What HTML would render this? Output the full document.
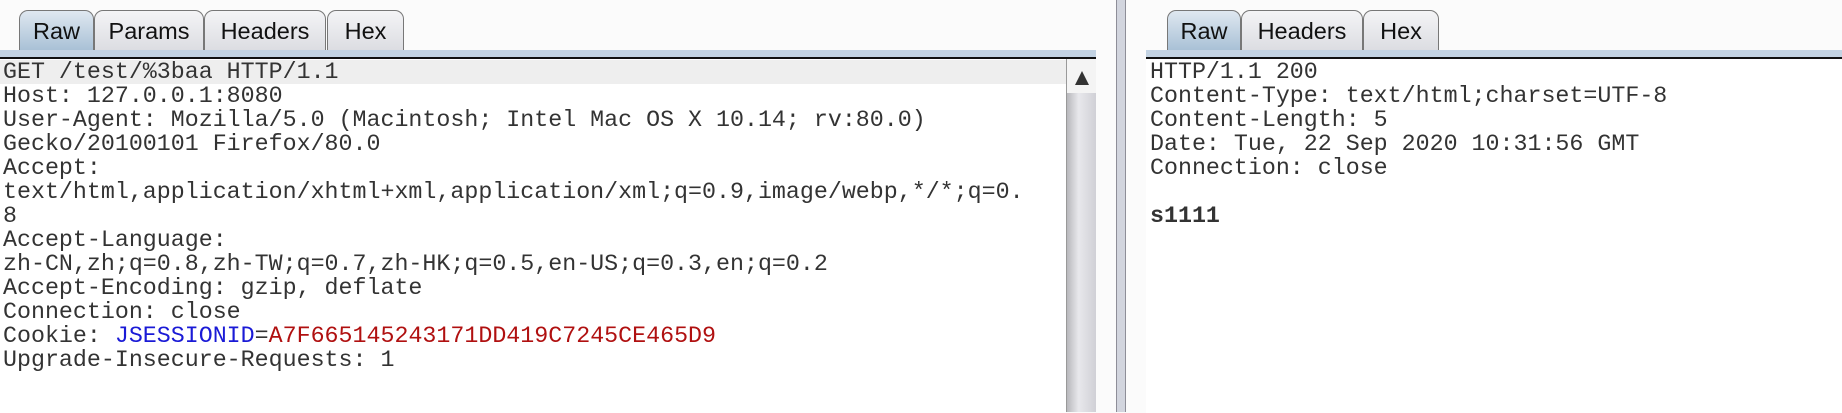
<!DOCTYPE html>
<html><head><meta charset="utf-8"><style>
body{margin:0;width:1842px;height:412px;background:#fbfbfb;position:relative;overflow:hidden;font-family:"Liberation Sans",sans-serif}
.tab{position:absolute;top:10px;height:40px;border:1px solid #777;border-bottom:none;border-radius:9px 9px 0 0;background:linear-gradient(#f4f4f6,#dcdde2);font-size:23.5px;line-height:41px;text-align:center;color:#111;box-sizing:border-box}
.tab.sel{background:linear-gradient(#dfe8f0,#a9c1d6)}
.band{position:absolute;top:50px;height:7px;background:#c3d3e3}
.dark{position:absolute;top:57px;height:2px;background:#111}
.txt{position:absolute;background:#fff;font-family:"Liberation Mono",monospace;font-size:23.3px;line-height:24px;color:#333;white-space:pre;overflow:hidden}
.hl{background:#eee;display:block;margin-left:-3px;padding-left:3px}
</style></head><body>
<div class="tab sel" style="left:19px;width:75px">Raw</div>
<div class="tab" style="left:94px;width:110px">Params</div>
<div class="tab" style="left:204px;width:122px">Headers</div>
<div class="tab" style="left:327px;width:77px">Hex</div>
<div class="band" style="left:0;width:1096px"></div>
<div class="dark" style="left:0;width:1096px"></div>
<div class="txt" style="left:0;top:59px;width:1063px;height:353px;padding-top:1px;padding-left:3px"><span class="hl">GET /test/%3baa HTTP/1.1</span>Host: 127.0.0.1:8080
User-Agent: Mozilla/5.0 (Macintosh; Intel Mac OS X 10.14; rv:80.0)
Gecko/20100101 Firefox/80.0
Accept:
text/html,application/xhtml+xml,application/xml;q=0.9,image/webp,*/*;q=0.
8
Accept-Language:
zh-CN,zh;q=0.8,zh-TW;q=0.7,zh-HK;q=0.5,en-US;q=0.3,en;q=0.2
Accept-Encoding: gzip, deflate
Connection: close
Cookie: <span style="color:#1a1ad6">JSESSIONID</span>=<span style="color:#b01010">A7F665145243171DD419C7245CE465D9</span>
Upgrade-Insecure-Requests: 1</div>
<div style="position:absolute;left:1066px;top:59px;width:30px;height:353px;background:linear-gradient(90deg,#b8b8bc,#e8e8ec 40%,#d0d0d6);border-left:1px solid #999;box-sizing:border-box"></div>
<div style="position:absolute;left:1067px;top:59px;width:29px;height:34px;background:#f4f4f4"></div>
<div style="position:absolute;left:1075px;top:71px;width:0;height:0;border-left:7px solid transparent;border-right:7px solid transparent;border-bottom:14px solid #333"></div>
<div style="position:absolute;left:1116px;top:0;width:10px;height:412px;background:#d2d5de;border-left:1px solid #8e8e98;border-right:1px solid #8e8e98;box-sizing:border-box"></div>
<div class="tab sel" style="left:1167px;width:74px">Raw</div>
<div class="tab" style="left:1241px;width:122px">Headers</div>
<div class="tab" style="left:1363px;width:76px">Hex</div>
<div class="band" style="left:1146px;width:696px"></div>
<div class="dark" style="left:1146px;width:696px"></div>
<div class="txt" style="left:1146px;top:59px;width:696px;height:353px;padding-left:4px;padding-top:1px">HTTP/1.1 200
Content-Type: text/html;charset=UTF-8
Content-Length: 5
Date: Tue, 22 Sep 2020 10:31:56 GMT
Connection: close

<b>s1111</b></div>
</body></html>
